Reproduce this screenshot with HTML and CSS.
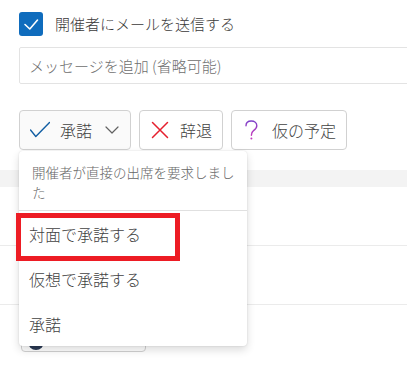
FILE: index.html
```html
<!DOCTYPE html>
<html lang="ja">
<head>
    <meta charset="UTF-8">
    <meta name="viewport" content="width=device-width, initial-scale=1.0">
    <title>出欠の返信</title>
    <link rel="stylesheet" href="styles.css">
</head>
<body>
    <div class="page">
        <div class="compose">
            <label class="send-row">
                <span class="checkbox">
                    <svg width="24" height="24" viewBox="0 0 24 24"><path d="M6 12.5 L10.8 17 L18.5 8" fill="none" stroke="#fff" stroke-width="1.6" stroke-linecap="round" stroke-linejoin="round"/></svg>
                </span>
                <span class="send-label">開催者にメールを送信する</span>
            </label>

            <div class="message-wrap">
                <div class="message">メッセージを追加 (省略可能)</div>
            </div>

            <div class="actions">
                <div class="response">
                    <button class="btn btn-accept">
                        <svg class="icon" width="20" height="20" viewBox="0 0 20 20"><path d="M0.5 10 L5.8 16.5 L19.5 2.5" fill="none" stroke="#115ea3" stroke-width="1.4" stroke-linecap="round" stroke-linejoin="round"/></svg>
                        <span>承諾</span>
                        <svg class="chevron" width="16" height="16" viewBox="0 0 16 16"><path d="M2 5 L8 11 L14 5" fill="none" stroke="#616161" stroke-width="1.2" stroke-linecap="round" stroke-linejoin="round"/></svg>
                    </button>
                    <button class="btn">
                        <svg class="icon" width="20" height="20" viewBox="0 0 20 20"><path d="M2.5 2.5 L17.5 17.5 M17.5 2.5 L2.5 17.5" fill="none" stroke="#e5202e" stroke-width="1.5" stroke-linecap="round"/></svg>
                        <span>辞退</span>
                    </button>
                    <button class="btn">
                        <svg class="icon" width="20" height="20" viewBox="0 0 20 20">
                            <defs>
                                <linearGradient id="qGrad" x1="0" y1="0" x2="0" y2="1">
                                    <stop offset="0" stop-color="#7b3fc8"/>
                                    <stop offset="1" stop-color="#c23bbd"/>
                                </linearGradient>
                            </defs>
                            <path d="M4 5.8 C4 2.8 6.3 1 9.3 1 C12.4 1 14.8 2.9 14.8 5.8 C14.8 8.4 13 9.6 11.5 10.6 C10 11.6 9.4 12.7 9.4 15.3" fill="none" stroke="url(#qGrad)" stroke-width="1.4" stroke-linecap="round"/>
                            <circle cx="9.4" cy="18.6" r="1" fill="#c23bbd"/>
                        </svg>
                        <span>仮の予定</span>
                    </button>
                </div>

                <div class="menu">
                    <div class="menu-header">開催者が直接の出席を要求しました</div>
                    <div class="menu-item highlight">対面で承諾する<span class="annotation"></span></div>
                    <div class="menu-item">仮想で承諾する</div>
                    <div class="menu-item">承諾</div>
                </div>
            </div>
        </div>

        <div class="band"></div>
        <div class="section"></div>
        <div class="section"></div>
        <div class="section last">
            <div class="chip">
                <span class="avatar"></span>
                <span class="chip-text">参加者</span>
            </div>
        </div>
    </div>
</body>
</html>
```

FILE: styles.css
```css
/* 基本 */
* {
    margin: 0;
    padding: 0;
    box-sizing: border-box;
}

html, body {
    overflow: hidden;
}

body {
    font-family: "Noto Sans CJK JP", "Noto Sans", sans-serif;
    font-weight: 300;
    background: #fff;
    color: #323130;
}

.page {
    width: 407px;
}

/* 返信の作成 */
.compose {
    padding: 12px 0 0 19px;
}

.send-row {
    display: flex;
    align-items: center;
    gap: 12px;
    height: 24px;
}

.checkbox {
    width: 24px;
    height: 24px;
    border-radius: 3px;
    background: #0f6cbd;
    display: flex;
}

.send-label {
    font-size: 15px;
    line-height: 24px;
    color: #3b3a39;
}

.message-wrap {
    margin-top: 11px;
    overflow: hidden;
}

.message {
    width: 400px;
    height: 37px;
    border: 1px solid #e3e3e3;
    border-radius: 2px;
    padding: 0 9px;
    display: flex;
    align-items: center;
    font-size: 15px;
    color: #6e6e6e;
}

.actions {
    position: relative;
    margin-top: 26px;
}

.response {
    display: flex;
    gap: 8px;
}

.btn {
    height: 40px;
    display: flex;
    align-items: center;
    gap: 10px;
    padding: 0 10px;
    border: 1px solid #d1d1d1;
    border-radius: 4px;
    background: #fff;
    font-family: inherit;
    font-weight: 300;
    font-size: 16px;
    line-height: 20px;
    color: #424242;
}

.btn-accept {
    background: #fafafa;
}

.chevron {
    margin-left: 2px;
}

/* ドロップダウン */
.menu {
    position: absolute;
    top: 41px;
    left: 0;
    width: 228px;
    background: #fff;
    border-radius: 4px;
    box-shadow: 0 0 2px rgba(0, 0, 0, 0.12), 0 4px 8px rgba(0, 0, 0, 0.14);
    z-index: 2;
}

.menu-header {
    padding: 11px 7px 8px 13px;
    font-size: 13.5px;
    line-height: 20px;
    color: #666;
    border-bottom: 1px solid #e0e0e0;
}

.menu-item {
    height: 45px;
    display: flex;
    align-items: center;
    padding-left: 10px;
    font-size: 16px;
    color: #424242;
}

.highlight {
    position: relative;
}

.annotation {
    position: absolute;
    left: -3px;
    top: 2px;
    width: 164px;
    height: 48px;
    border: 5px solid #ed1c24;
}

/* 背景の区切り */
.band {
    margin-top: 20px;
    height: 17px;
    background: #f3f3f3;
}

.section {
    height: 59px;
    border-bottom: 1px solid #ebebeb;
}

.section:nth-of-type(2) {
    height: 58px;
}

.section.last {
    height: 60px;
    border-bottom: none;
    padding: 15px 0 0 21px;
}

.chip {
    width: 125px;
    height: 32px;
    border: 1px solid #d1d1d1;
    border-radius: 4px;
    display: flex;
    align-items: center;
    gap: 16px;
    padding-left: 6px;
}

.avatar {
    width: 16px;
    height: 16px;
    border-radius: 50%;
    background: #2b3a55;
    margin-top: 12px;
}

.chip-text {
    font-size: 14px;
    color: #b0b0b0;
    margin-top: -4px;
}
```
